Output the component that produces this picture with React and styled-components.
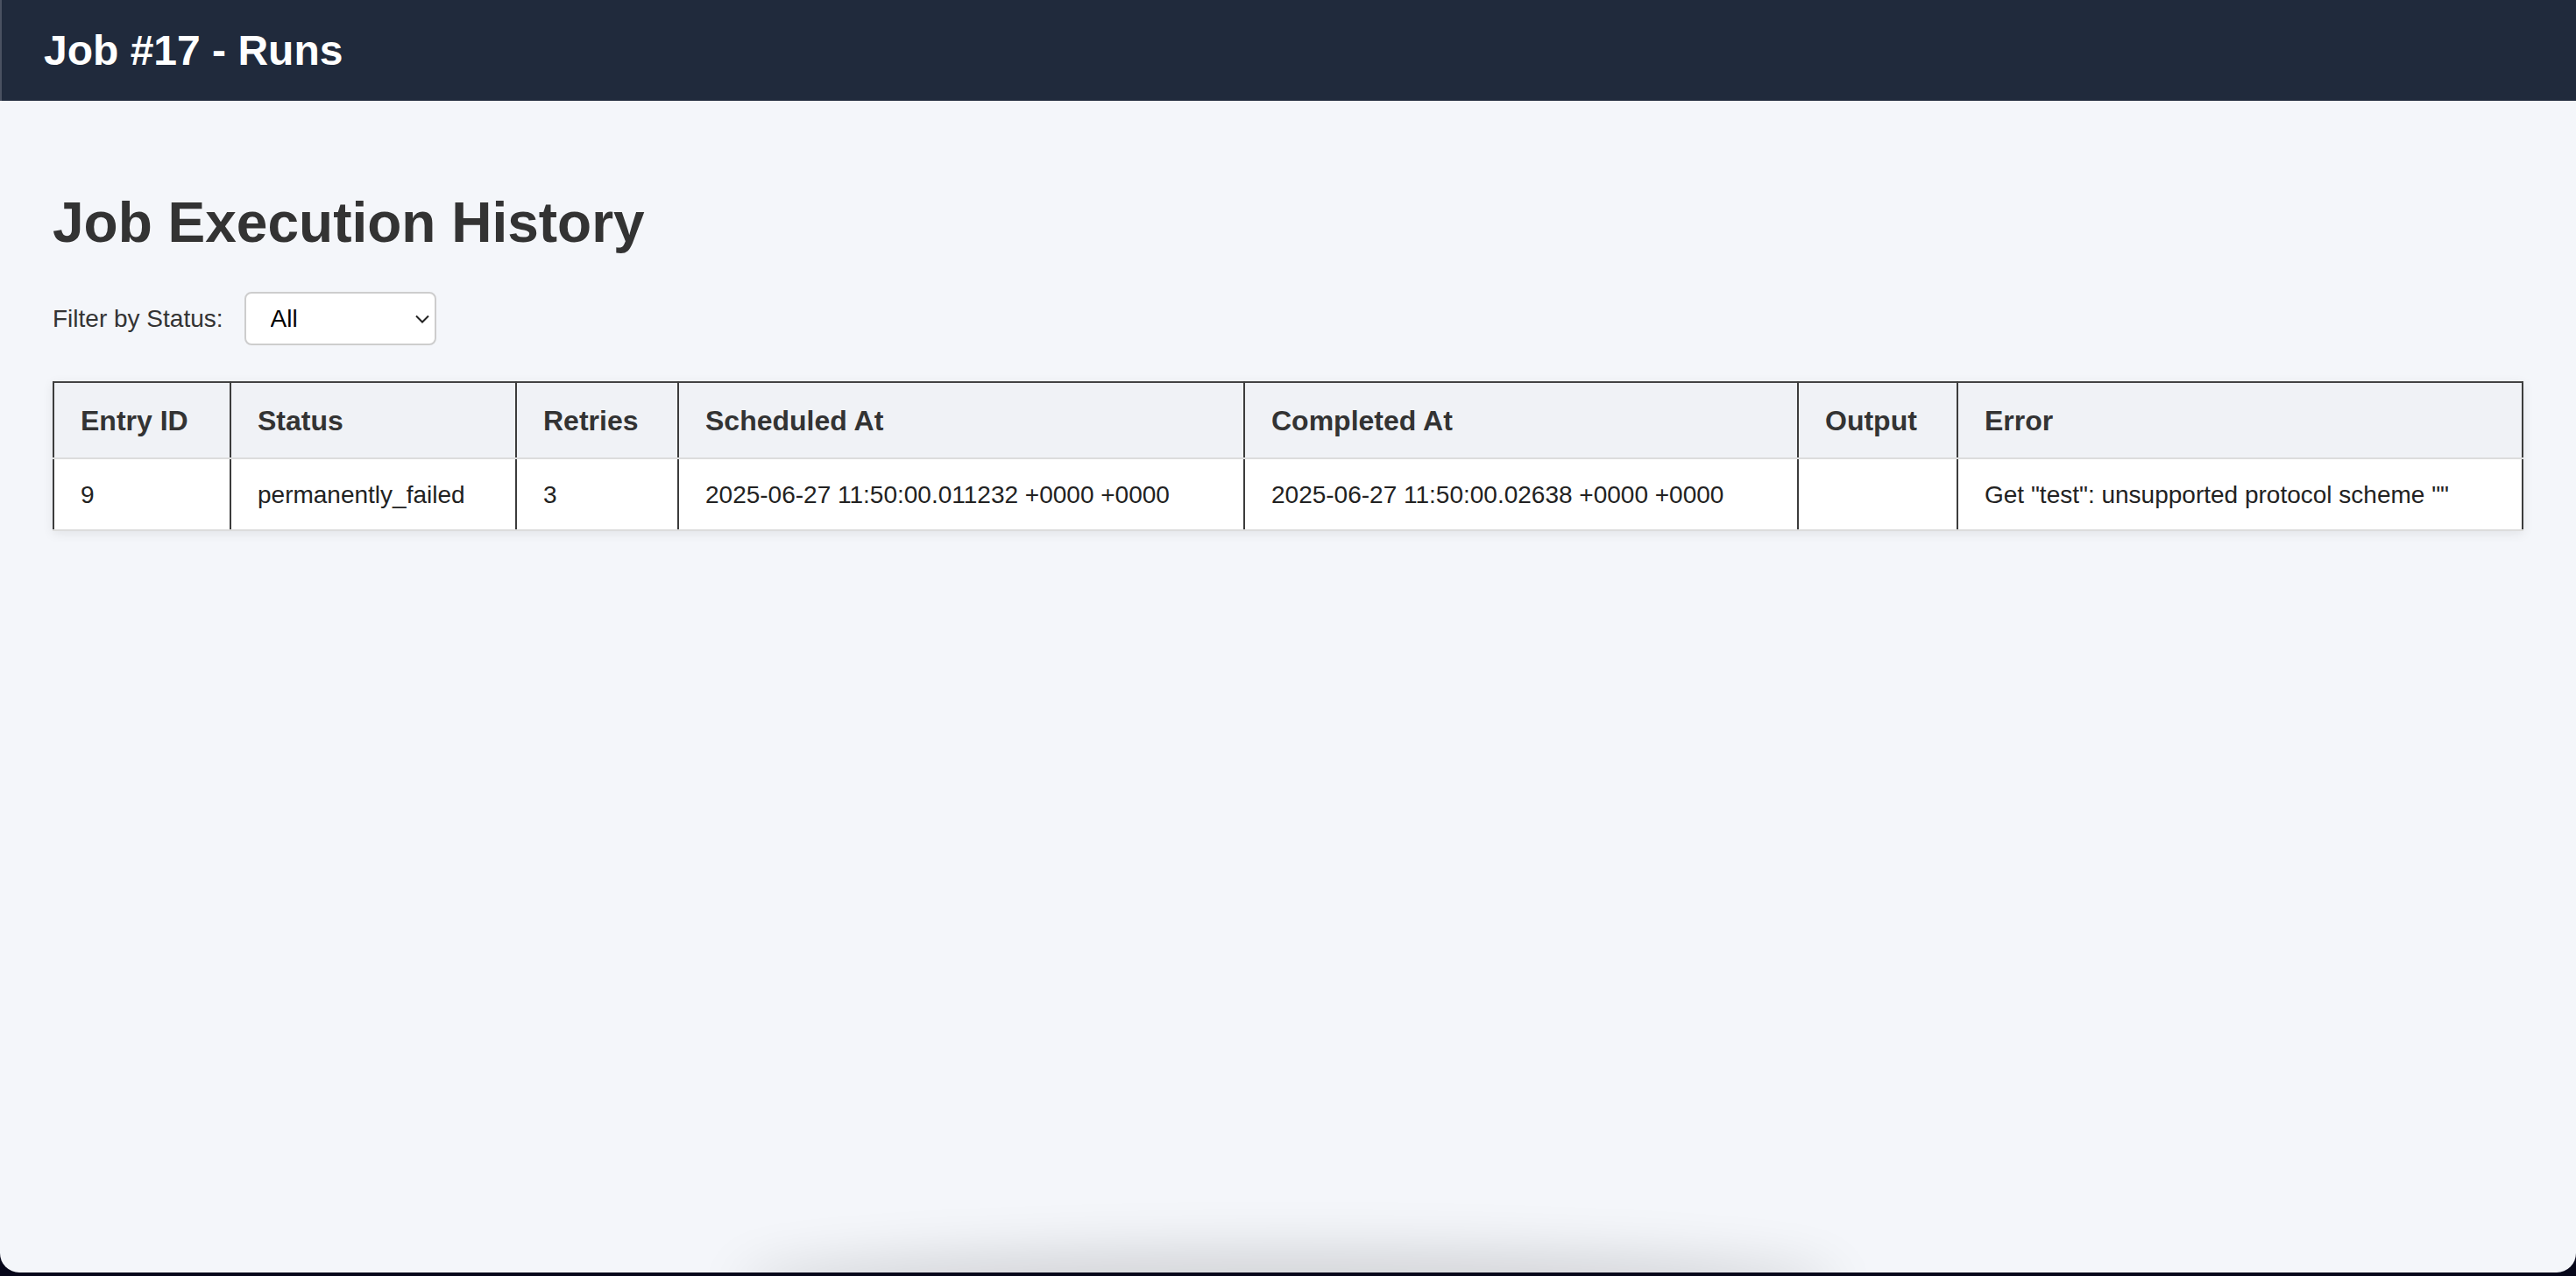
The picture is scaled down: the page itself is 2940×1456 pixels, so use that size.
import React from "react";
import styled, { createGlobalStyle } from "styled-components";

const Global = createGlobalStyle`
  html, body {
    margin: 0;
    padding: 0;
    background: #07071a;
  }
  body {
    font-family: "Liberation Sans", Arial, Helvetica, sans-serif;
  }
  * { box-sizing: border-box; }
`;

const Page = styled.div`
  position: relative;
  min-height: 1452px;
  background: #f4f6fa;
  border-radius: 0 0 22px 22px;
  overflow: hidden;
  color: #333;
`;

const Header = styled.header`
  background: #202a3c;
  height: 115px;
  padding: 0 50px;
  display: flex;
  align-items: center;
  box-shadow: inset 2px 0 0 #4a5161;
`;

const Title = styled.h1`
  margin: 0;
  color: #fff;
  font-size: 48px;
  font-weight: 700;
  line-height: 55px;
`;

const Main = styled.main`
  padding: 102px 60px 0;
`;

const Heading = styled.h2`
  margin: 0 0 42px;
  font-size: 64px;
  font-weight: 700;
  line-height: 74px;
  color: #333;
`;

const FilterRow = styled.div`
  display: flex;
  align-items: center;
  gap: 24px;
  margin-bottom: 41px;
`;

const Label = styled.label`
  font-size: 28px;
  color: #333;
`;

const SelectWrap = styled.div`
  position: relative;
  width: 219px;
  height: 61px;
`;

const Select = styled.select`
  appearance: none;
  -webkit-appearance: none;
  width: 100%;
  height: 100%;
  border: 2px solid #cdcdcd;
  border-radius: 8px;
  background: #fff;
  padding: 0 0 0 28px;
  font-family: "Liberation Sans", Arial, sans-serif;
  font-size: 28px;
  color: #000;
  outline: none;
`;

const Chevron = styled.svg`
  position: absolute;
  right: 8px;
  top: 50%;
  margin-top: -5px;
  width: 16px;
  height: 10px;
  pointer-events: none;
`;

const Table = styled.table`
  width: 2818px;
  table-layout: fixed;
  border-collapse: collapse;
  background: #fff;
  box-shadow: 0 3px 12px rgba(0, 0, 0, 0.08);
  border-top: 2px solid #444;
`;

const Th = styled.th`
  width: ${(p) => p.$w}px;
  text-align: left;
  background: #f0f2f6;
  font-size: 32px;
  font-weight: 700;
  line-height: 37px;
  color: #333;
  padding: 25px 30px 23px;
  border-left: 2px solid #3c3c3c;
  border-right: 2px solid #3c3c3c;
  border-bottom: 2px solid #dcdcdc;
  white-space: nowrap;
`;

const Td = styled.td`
  font-size: 28px;
  line-height: 32px;
  color: #222;
  padding: 25px 30px 23px;
  border-left: 2px solid #3c3c3c;
  border-right: 2px solid #3c3c3c;
  border-bottom: 2px solid #dcdcdc;
  white-space: nowrap;
`;

const BottomShadow = styled.div`
  position: absolute;
  left: 860px;
  width: 1220px;
  bottom: -40px;
  height: 40px;
  border-radius: 50%;
  box-shadow: 0 -6px 60px 20px rgba(0, 0, 0, 0.14);
  pointer-events: none;
`;

const columns = [
  ["Entry ID", 202],
  ["Status", 326],
  ["Retries", 185],
  ["Scheduled At", 646],
  ["Completed At", 632],
  ["Output", 182],
  ["Error", 645],
];

const rows = [
  [
    "9",
    "permanently_failed",
    "3",
    "2025-06-27 11:50:00.011232 +0000 +0000",
    "2025-06-27 11:50:00.02638 +0000 +0000",
    "",
    'Get "test": unsupported protocol scheme ""',
  ],
];

export default function App() {
  return (
    <>
      <Global />
      <Page>
        <Header>
          <Title>Job #17 - Runs</Title>
        </Header>
        <Main>
          <Heading>Job Execution History</Heading>
          <FilterRow>
            <Label htmlFor="status">Filter by Status:</Label>
            <SelectWrap>
              <Select id="status" defaultValue="all">
                <option value="all">All</option>
                <option value="success">success</option>
                <option value="failed">failed</option>
                <option value="permanently_failed">permanently_failed</option>
              </Select>
              <Chevron viewBox="0 0 16 10">
                <path d="M1 1.5 L8 8.5 L15 1.5" fill="none" stroke="#222" strokeWidth="2" />
              </Chevron>
            </SelectWrap>
          </FilterRow>
          <Table>
            <thead>
              <tr>
                {columns.map(([c, w]) => (
                  <Th key={c} $w={w}>{c}</Th>
                ))}
              </tr>
            </thead>
            <tbody>
              {rows.map((r, i) => (
                <tr key={i}>
                  {r.map((v, j) => (
                    <Td key={j}>{v}</Td>
                  ))}
                </tr>
              ))}
            </tbody>
          </Table>
        </Main>
        <BottomShadow />
      </Page>
    </>
  );
}
